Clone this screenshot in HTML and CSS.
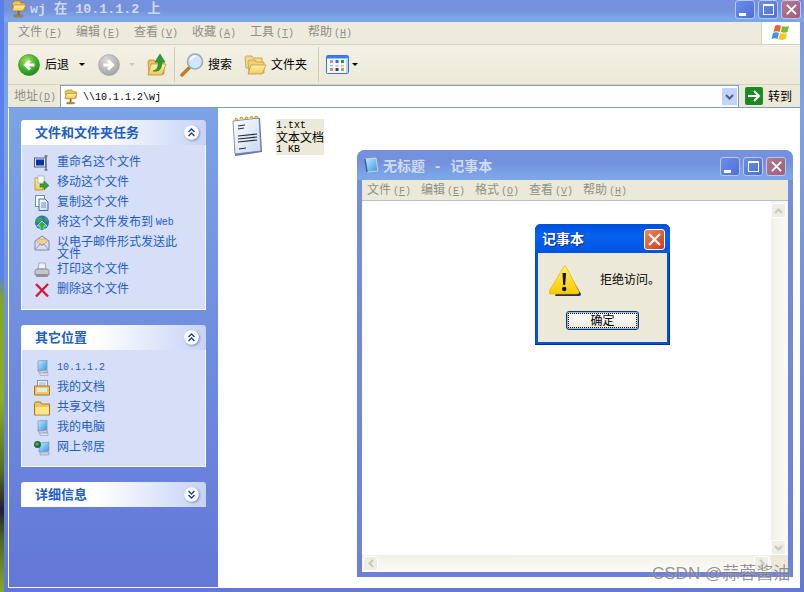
FILE: index.html
```html
<!DOCTYPE html>
<html lang="zh-CN">
<head>
<meta charset="utf-8">
<title>wj 在 10.1.1.2 上</title>
<link rel="stylesheet" href="styles.css">
</head>
<body>
<svg class="defs" aria-hidden="true">
  <defs>
    <radialGradient id="gGreen" cx=".4" cy=".3" r=".8"><stop offset="0" stop-color="#a6e45c"/><stop offset=".55" stop-color="#3fae26"/><stop offset="1" stop-color="#14801a"/></radialGradient>
    <radialGradient id="gGrey" cx=".4" cy=".3" r=".8"><stop offset="0" stop-color="#dcdcdc"/><stop offset="1" stop-color="#9c9c9c"/></radialGradient>
    <linearGradient id="gFolder" x1="0" y1="0" x2="0" y2="1"><stop offset="0" stop-color="#fff3b0"/><stop offset="1" stop-color="#f0c757"/></linearGradient>
    <linearGradient id="gScreen" x1="0" y1="0" x2="1" y2="1"><stop offset="0" stop-color="#c4ecff"/><stop offset="1" stop-color="#2f96e8"/></linearGradient>
    <linearGradient id="gWarn" x1="0" y1="0" x2="0" y2="1"><stop offset="0" stop-color="#fff25a"/><stop offset="1" stop-color="#f8c800"/></linearGradient>
    <linearGradient id="gPage" x1="0" y1="0" x2="1" y2="1"><stop offset="0" stop-color="#ffffff"/><stop offset="1" stop-color="#c8d8ee"/></linearGradient>
    <symbol id="netfolder" viewBox="0 0 16 18">
      <path d="M1 3l3-2h5l1 2h4v7H3z" fill="#f3c74f" stroke="#a87c1c" stroke-width=".7"/>
      <path d="M1 11l2-6h12l-3 6z" fill="url(#gFolder)" stroke="#a87c1c" stroke-width=".7"/>
      <rect x="6.500" y="11" width="2" height="4" fill="#8a6a1c"/>
      <rect x="3" y="15" width="9" height="2" rx="1" fill="#b8922c" stroke="#6a5010" stroke-width=".4"/>
    </symbol>
    <symbol id="computer" viewBox="0 0 16 16">
      <path d="M4 1l9-1v10l-9 1z" fill="url(#gScreen)" stroke="#8a94b8" stroke-width=".8"/>
      <path d="M4 11l9-1 1 2-8 2z" fill="#c8cce0" stroke="#7a80a0" stroke-width=".5"/>
      <path d="M6 13h8v2.500H6z" fill="#dcdfee" stroke="#8a90a8" stroke-width=".5"/>
    </symbol>
    <symbol id="chevup" viewBox="0 0 15 15">
      <circle cx="7.500" cy="7.500" r="7.300" fill="#fff"/>
      <path d="M4.500 7l3-3 3 3M4.500 11l3-3 3 3" fill="none" stroke="#17419e" stroke-width="1.400"/>
    </symbol>
    <symbol id="chevdown" viewBox="0 0 15 15">
      <circle cx="7.500" cy="7.500" r="7.300" fill="#fff"/>
      <path d="M4.500 4l3 3 3-3M4.500 8l3 3 3-3" fill="none" stroke="#17419e" stroke-width="1.400"/>
    </symbol>
  </defs>
</svg>

<div class="desk-strip"></div>

<div class="window">
  <header class="titlebar">
    <svg class="title-icon"><use href="#netfolder"/></svg>
    <span class="title-text">wj 在 10.1.1.2 上</span>
    <div class="win-btns">
      <span class="wbtn"><i class="g-min"></i></span>
      <span class="wbtn"><i class="g-max"></i></span>
      <span class="wbtn wbtn-close"><svg viewBox="0 0 12 12"><path d="M1 1l10 10M11 1L1 11" stroke="#fff" stroke-width="2"/></svg></span>
    </div>
  </header>

  <div class="frame">
    <nav class="menubar">
      <div class="menu-items">
        <span class="mi">文件<span class="lat">(<u>F</u>)</span></span>
        <span class="mi">编辑<span class="lat">(<u>E</u>)</span></span>
        <span class="mi">查看<span class="lat">(<u>V</u>)</span></span>
        <span class="mi">收藏<span class="lat">(<u>A</u>)</span></span>
        <span class="mi">工具<span class="lat">(<u>T</u>)</span></span>
        <span class="mi">帮助<span class="lat">(<u>H</u>)</span></span>
      </div>
      <div class="logo-cell">
        <svg width="20" height="18" viewBox="0 0 20 18">
          <path d="M4 2q3-2 6 0l-1.500 6q-3-1.500-6 0z" fill="#f0622c"/>
          <path d="M11 2q3 1.500 7 0l-1.500 6q-4 1.500-6.500 0z" fill="#7cbc2c"/>
          <path d="M2 9q3-1.500 6 0l-1.500 6q-3-1.500-6 0z" fill="#3c94e4"/>
          <path d="M9 9q3 1.500 7 0l-1.500 6q-4 2-7 0z" fill="#fcc414"/>
        </svg>
      </div>
    </nav>

    <div class="toolbar">
      <svg class="t-back" width="22" height="22" viewBox="0 0 22 22"><circle cx="11" cy="11" r="10.500" fill="url(#gGreen)" stroke="#2a8a20" stroke-width=".6"/><path d="M16.500 11h-8M12 6.500L7.500 11l4.500 4.500" fill="none" stroke="#fff" stroke-width="3"/></svg>
      <span class="t-label t-l-back">后退</span>
      <i class="caret t-c-back"></i>
      <svg class="t-fwd" width="22" height="22" viewBox="0 0 22 22"><circle cx="11" cy="11" r="10.500" fill="url(#gGrey)" stroke="#a0a0a0" stroke-width=".6"/><path d="M5.500 11h8M10 6.500l4.500 4.500-4.500 4.500" fill="none" stroke="#fff" stroke-width="3"/></svg>
      <i class="caret caret-off t-c-fwd"></i>
      <svg class="t-up" width="20" height="23" viewBox="0 0 20 23">
        <path d="M1 9l1-2h5l1 2h9v12H2z" fill="#eec35a" stroke="#b08a2a" stroke-width=".7"/>
        <path d="M1 22l3-11h15l-4 11z" fill="url(#gFolder)" stroke="#b08a2a" stroke-width=".7"/>
        <path d="M6 18q5-.5 5.500-9H8L13 1l5 8h-3q0 11-9 9z" fill="#2e9a34" stroke="#1a7020" stroke-width=".5"/>
      </svg>
      <i class="t-sep t-sep-1"></i>
      <svg class="t-search" width="25" height="25" viewBox="0 0 25 25">
        <path d="M2 23l7-7" stroke="#c6792c" stroke-width="3.500" stroke-linecap="round"/>
        <circle cx="15" cy="9.500" r="7.500" fill="#cfe6fb" stroke="#9aa8c8" stroke-width="1.600"/>
        <path d="M10.500 8q1.500-3.500 5-4" fill="none" stroke="#fff" stroke-width="1.600"/>
      </svg>
      <span class="t-label t-l-search">搜索</span>
      <svg class="t-folders" width="23" height="22" viewBox="0 0 23 22">
        <path d="M1 4l1-2h6l1 2h9v10H2z" fill="#f4da8c" stroke="#c09c3c" stroke-width=".8"/>
        <path d="M4 8l1-2h6l1 2h8v11H5z" fill="#f2d277" stroke="#c09c3c" stroke-width=".8"/>
        <path d="M4 20l3-9h15l-4 9z" fill="url(#gFolder)" stroke="#c09c3c" stroke-width=".8"/>
      </svg>
      <span class="t-label t-l-folders">文件夹</span>
      <i class="t-sep t-sep-2"></i>
      <svg class="t-views" width="23" height="19" viewBox="0 0 23 19">
        <rect x=".5" y=".5" width="22" height="18" rx="1" fill="#f6f8ff" stroke="#3a72d8"/>
        <rect x="1" y="1" width="21" height="2.500" fill="#3a80e8"/>
        <path d="M22 3v15H20V3z" fill="#bcd0f4"/>
        <rect x="4" y="5" width="3" height="3" fill="#a29be0"/><rect x="9.500" y="5" width="3" height="3" fill="#3d6cc8"/><rect x="15" y="5" width="3" height="3" fill="#2a9a30"/>
        <rect x="4" y="10" width="3" height="1.500" fill="#bbb"/><rect x="9.500" y="10" width="3" height="1.500" fill="#bbb"/><rect x="15" y="10" width="3" height="1.500" fill="#bbb"/>
        <rect x="4" y="13" width="3" height="3" fill="#f08a50"/><rect x="9.500" y="13" width="3" height="3" fill="#1a4490"/><rect x="15" y="13" width="3" height="3" fill="#d8a020"/>
      </svg>
      <i class="caret t-c-views"></i>
    </div>

    <div class="addressbar">
      <span class="addr-label">地址<span class="lat">(<u>D</u>)</span></span>
      <div class="addr-box">
        <svg class="addr-icon"><use href="#netfolder"/></svg>
        <span class="lat addr-text">\\10.1.1.2\wj</span>
        <span class="addr-drop"><svg width="9" height="6" viewBox="0 0 9 6"><path d="M1 1l3.500 3.500L8 1" fill="none" stroke="#4d6185" stroke-width="2"/></svg></span>
      </div>
      <span class="go-btn"><svg width="18" height="18" viewBox="0 0 18 18"><rect width="18" height="18" rx="2" fill="#1c8a24"/><path d="M3 9h10M9 4l5 5-5 5" fill="none" stroke="#fff" stroke-width="2"/></svg></span>
      <span class="go-label">转到</span>
    </div>

    <main class="main">
      <aside class="sidebar">
        <section class="panel">
          <div class="panel-head"><h2>文件和文件夹任务</h2><svg class="toggle"><use href="#chevup"/></svg></div>
          <div class="panel-body">
            <div class="row">
              <svg class="ico" viewBox="0 0 16 16"><rect x=".5" y="3" width="11" height="9" fill="#e8ecf8" stroke="#555c78"/><rect x="2" y="4.500" width="8" height="6" fill="#0a2fa8"/><path d="M12 1v14M10.500 1h3M10.500 15h3" stroke="#6a7088" stroke-width="1.500" fill="none"/></svg>
              <span class="txt">重命名这个文件</span>
            </div>
            <div class="row">
              <svg class="ico" viewBox="0 0 16 16"><path d="M1 3h4l1 1h3v11H1z" fill="url(#gFolder)" stroke="#b08a2a" stroke-width=".8"/><rect x="4" y="1" width="6" height="7" fill="#fff" stroke="#8a94b0" stroke-width=".6"/><path d="M6 9h4V6l5 4.500-5 4.500v-3H6z" fill="#38a030" stroke="#1c7020" stroke-width=".5"/></svg>
              <span class="txt">移动这个文件</span>
            </div>
            <div class="row">
              <svg class="ico" viewBox="0 0 16 16"><rect x="1.500" y=".5" width="9" height="11" fill="#fff" stroke="#7a88a8"/><path d="M5 4h6l3 3v8.500H5z" fill="url(#gPage)" stroke="#4a6a9c"/><path d="M7 8h5M7 10h5M7 12h5" stroke="#6a94d0"/></svg>
              <span class="txt">复制这个文件</span>
            </div>
            <div class="row">
              <svg class="ico" viewBox="0 0 16 16"><circle cx="8" cy="7.500" r="7" fill="#2a6ed0"/><path d="M3 3q3-2 5 0t-2 4-4-1zM10 1q4 2 4 6l-3-1z" fill="#3fa83a"/><path d="M8 6l5 5h-3v4.500H6V11H3z" fill="#2fb030" stroke="#fff" stroke-width=".6"/></svg>
              <span class="txt">将这个文件发布到 <span class="lat">Web</span></span>
            </div>
            <div class="row row-wrap">
              <svg class="ico" viewBox="0 0 16 16"><path d="M1 6l7-5 7 5v9H1z" fill="#d6def4" stroke="#7c88a8"/><path d="M3 7V4h10v3L8 10z" fill="#f4d090" stroke="#c09050" stroke-width=".5"/><path d="M1 15l5-6 2 1.500L10 9l5 6" fill="none" stroke="#8a96bc"/></svg>
              <span class="txt">以电子邮件形式发送此文件</span>
            </div>
            <div class="row">
              <svg class="ico" viewBox="0 0 16 16"><path d="M5 1h6l1 6H4z" fill="#f4f4f8" stroke="#8a8e9e" stroke-width=".7"/><path d="M1 9q0-2 3-2h8q3 0 3 2v4H1z" fill="#c4c6cc" stroke="#70747e" stroke-width=".7"/><rect x="2" y="12" width="12" height="3" rx="1" fill="#8e9098"/></svg>
              <span class="txt">打印这个文件</span>
            </div>
            <div class="row">
              <svg class="ico" viewBox="0 0 16 16"><path d="M2 2l12 12.500M14 2L2 14.500" stroke="#d21b3a" stroke-width="2.400"/></svg>
              <span class="txt">删除这个文件</span>
            </div>
          </div>
        </section>

        <section class="panel">
          <div class="panel-head"><h2>其它位置</h2><svg class="toggle"><use href="#chevup"/></svg></div>
          <div class="panel-body panel-body-places">
            <div class="row"><svg class="ico"><use href="#computer"/></svg><span class="txt"><span class="lat">10.1.1.2</span></span></div>
            <div class="row">
              <svg class="ico" viewBox="0 0 16 16"><rect x="3.500" y=".5" width="10" height="8" fill="#eef2fa" stroke="#8a94b0"/><path d="M5 3h7M5 5h7" stroke="#9aa8c8"/><path d="M.5 6h15v9H.5z" fill="#f0c85a" stroke="#a47c20"/><rect x="3" y="8" width="10" height="4" fill="#e2e8f4"/></svg>
              <span class="txt">我的文档</span>
            </div>
            <div class="row">
              <svg class="ico" viewBox="0 0 16 16"><path d="M.5 3.500l1-1.500h5l1 2h8v11H.5z" fill="#f0c85a" stroke="#a47c20"/><path d="M1.500 7h13.500v7.500H1.500z" fill="#fbe48a"/></svg>
              <span class="txt">共享文档</span>
            </div>
            <div class="row"><svg class="ico"><use href="#computer"/></svg><span class="txt">我的电脑</span></div>
            <div class="row">
              <svg class="ico" viewBox="0 0 16 16"><path d="M5 3l10-1v9l-10 1z" fill="url(#gScreen)" stroke="#8a94b8" stroke-width=".7"/><path d="M6 12h9v3H6z" fill="#cdd0e2" stroke="#7a80a0" stroke-width=".5"/><circle cx="3.500" cy="4.500" r="3.500" fill="#1c6e3a"/><path d="M1 4q2-3 4 0l-2 2z" fill="#56b040"/></svg>
              <span class="txt">网上邻居</span>
            </div>
          </div>
        </section>

        <section class="panel">
          <div class="panel-head"><h2>详细信息</h2><svg class="toggle"><use href="#chevdown"/></svg></div>
        </section>
      </aside>

      <div class="content">
        <div class="file">
          <svg class="file-icon" width="31" height="44" viewBox="0 0 31 44">
            <path d="M2 6l26-3 2 34-27 4z" fill="#6a74b0"/>
            <path d="M1 6l26-3 2 33-26 3z" fill="url(#gPage)" stroke="#6c78a8" stroke-width=".8"/>
            <path d="M3 5q1-3 3 0M8 4q1-3 3 0M13 4q1-3 3-.5M18 3q1-3 3 0M23 3q1-3 3 0" fill="none" stroke="#d8a820" stroke-width="1.600"/>
            <path d="M6 11l7-1M6 14l6-1M6 21l19-2M6 24l19-2M6 27l19-2M7 34l7-1" stroke="#2c2c3c" stroke-width="1.100"/>
          </svg>
          <div class="file-text">
            <span class="lat">1.txt</span>
            <span>文本文档</span>
            <span class="lat">1 KB</span>
          </div>
        </div>
      </div>
    </main>
  </div>
</div>

<div class="notepad">
  <header class="np-title">
    <svg class="np-icon" width="15" height="16" viewBox="0 0 15 16"><path d="M1 2l11-1 2 13-11 1z" fill="url(#gScreen)" stroke="#e8e0a8" stroke-width=".8"/><path d="M1 2l2 13" stroke="#3a5aa8" stroke-width="1.500"/></svg>
    <span class="np-title-text">无标题 - 记事本</span>
    <div class="win-btns np-btns">
      <span class="wbtn"><i class="g-min"></i></span>
      <span class="wbtn"><i class="g-max"></i></span>
      <span class="wbtn wbtn-close"><svg viewBox="0 0 12 12"><path d="M1 1l10 10M11 1L1 11" stroke="#fff" stroke-width="2"/></svg></span>
    </div>
  </header>
  <nav class="np-menu">
    <span class="mi">文件<span class="lat">(<u>F</u>)</span></span>
    <span class="mi">编辑<span class="lat">(<u>E</u>)</span></span>
    <span class="mi">格式<span class="lat">(<u>O</u>)</span></span>
    <span class="mi">查看<span class="lat">(<u>V</u>)</span></span>
    <span class="mi">帮助<span class="lat">(<u>H</u>)</span></span>
  </nav>
  <div class="np-client">
    <div class="np-edit"></div>
    <div class="vscroll">
      <span class="sbtn"><svg width="9" height="6" viewBox="0 0 9 6"><path d="M1 5l3.500-3.500L8 5" fill="none" stroke="#c8c8bc" stroke-width="2"/></svg></span>
      <span class="sbtn"><svg width="9" height="6" viewBox="0 0 9 6"><path d="M1 1l3.500 3.500L8 1" fill="none" stroke="#c8c8bc" stroke-width="2"/></svg></span>
    </div>
    <div class="hscroll">
      <span class="sbtn"><svg width="6" height="9" viewBox="0 0 6 9"><path d="M5 1L1.500 4.500 5 8" fill="none" stroke="#c8c8bc" stroke-width="2"/></svg></span>
      <span class="sbtn"><svg width="6" height="9" viewBox="0 0 6 9"><path d="M1 1l3.500 3.500L1 8" fill="none" stroke="#c8c8bc" stroke-width="2"/></svg></span>
    </div>
    <div class="grip"></div>
  </div>
</div>

<div class="dialog">
  <header class="dlg-title">
    <span class="dlg-title-text">记事本</span>
    <span class="dlg-close"><svg viewBox="0 0 12 12"><path d="M1 1l10 10M11 1L1 11" stroke="#fff" stroke-width="2"/></svg></span>
  </header>
  <div class="dlg-body">
    <div class="dlg-msg">
      <svg width="32" height="32" viewBox="0 0 32 32">
        <path d="M17 3l15 26q0 2-2 2H6z" fill="#2a2a6a"/>
        <path d="M15 1.500q1-1 2 0l13 25q.5 2.500-2 2.500H2q-2.500 0-2-2.500z" fill="url(#gWarn)" stroke="#e0b000" stroke-width=".6"/>
        <path d="M13.500 8h3.500l-.8 12h-2z" fill="#10103a"/>
        <circle cx="15.200" cy="24" r="2.200" fill="#10103a"/>
      </svg>
      <span class="dlg-text">拒绝访问。</span>
    </div>
    <button class="dlg-ok" type="button"><span>确定</span></button>
  </div>
</div>

<div class="watermark">CSDN @蒜蓉酱油</div>
</body>
</html>
```

FILE: styles.css
```css
* { box-sizing: border-box; }

html, body { margin: 0; padding: 0; }

body {
  position: relative;
  display: flex;
  width: 804px;
  height: 592px;
  overflow: hidden;
  background: #fff;
  font-family: "Noto Sans CJK SC", "Liberation Sans", sans-serif;
  font-size: 12px;
  line-height: 12px;
  color: #000;
}

.defs { position: absolute; width: 0; height: 0; }

.lat { font-family: "Liberation Mono", "Noto Sans CJK SC", monospace; font-size: 10px; }

.desk-strip {
  flex: none;
  width: 4px;
  background: linear-gradient(180deg, #5a80ec 0, #5a80ec 275px, #7fa822 300px, #8cb018 400px, #56701c 470px, #241c2c 510px, #4c6a20 540px, #86a830 592px);
}

/* Explorer window */
.window {
  flex: 1;
  display: flex;
  flex-direction: column;
  min-width: 0;
  background: linear-gradient(180deg, #7897dd 0, #7ba3e6 110px, #6377d7 592px);
}

.titlebar {
  flex: none;
  display: flex;
  align-items: flex-start;
  height: 22px;
  background: linear-gradient(180deg, #7590dc 0, #7591dc 10px, #7ba6e8 18px, #7ba6e8 22px);
}
.title-icon { flex: none; width: 16px; height: 18px; margin: 0 0 0 7px; }
.title-text {
  margin: 2px 0 0 3px;
  font-family: "Liberation Mono", "Noto Sans CJK SC", monospace;
  font-size: 13.330px;
  line-height: 15px;
  font-weight: 700;
  color: #cfdaf2;
  white-space: pre;
}

.win-btns { display: flex; gap: 3px; margin-left: auto; margin-right: 3px; }
.wbtn {
  display: flex;
  align-items: center;
  justify-content: center;
  width: 20px;
  height: 19px;
  border: 1px solid #b9c9f0;
  border-radius: 3px;
  background: linear-gradient(135deg, #6d8fe6, #4a6fdc);
}
.wbtn-close { background: linear-gradient(135deg, #ad7b90, #a25f78); }
.wbtn-close svg { width: 11px; height: 11px; }
.g-min { width: 7px; height: 3px; margin: 9px 5px 0 0; background: #fff; }
.g-max { width: 11px; height: 11px; border: 1px solid #fff; border-top-width: 2px; }

.frame {
  flex: 1;
  display: flex;
  flex-direction: column;
  min-height: 0;
  margin: 0 4px 4px;
}

.menubar {
  flex: none;
  display: flex;
  height: 23px;
  background: #edeade;
  border-bottom: 1px solid #d8d2bd;
}
.menu-items { flex: 1; display: flex; align-items: center; padding: 0 0 1px 10px; }
.mi { width: 58px; flex: none; color: #8f8f85; white-space: nowrap; }
.mi .lat { margin-left: 2px; }
.logo-cell {
  flex: none;
  display: flex;
  align-items: center;
  justify-content: center;
  width: 39px;
  background: #fff;
  border-left: 1px solid #d8d2bd;
}

.toolbar {
  flex: none;
  display: flex;
  align-items: center;
  height: 40px;
  background: linear-gradient(180deg, #f3f1e6, #ece9d8);
  border-bottom: 1px solid #d8d2bd;
}
.t-label { flex: none; margin-bottom: 2px; white-space: nowrap; }
.t-back { margin-left: 10px; }
.t-l-back { margin-left: 5px; width: 24px; }
.caret { flex: none; width: 0; height: 0; border: 3px solid transparent; border-top: 3px solid #000; border-bottom: 0; }
.caret-off { border-top-color: #c8c8c0; }
.t-c-back { margin-left: 10px; }
.t-fwd { margin-left: 13px; }
.t-c-fwd { margin-left: 9px; }
.t-up { margin-left: 12px; }
.t-sep { flex: none; width: 1px; height: 35px; background: #d2ccb6; }
.t-sep-1 { margin-left: 7px; }
.t-search { margin-left: 5px; }
.t-l-search { margin-left: 3px; }
.t-folders { margin-left: 12px; }
.t-l-folders { margin-left: 4px; }
.t-sep-2 { margin-left: 11px; }
.t-views { margin-left: 7px; }
.t-c-views { margin-left: 3px; }

.addressbar {
  flex: none;
  display: flex;
  align-items: center;
  height: 22px;
  background: #ece9d8;
}
.addr-label { flex: none; width: 52px; padding-left: 6px; color: #8f8f85; }
.addr-box {
  flex: none;
  display: flex;
  align-items: center;
  width: 679px;
  height: 22px;
  background: #fff;
  border: 1px solid #7f9db9;
  border-bottom: 0;
}
.addr-icon { flex: none; width: 14px; height: 16px; margin-left: 3px; }
.addr-text { margin-left: 5px; padding-top: 2px; }
.addr-drop {
  display: flex;
  align-items: center;
  justify-content: center;
  width: 15px;
  height: 17px;
  margin-left: auto;
  margin-right: 1px;
  background: #c1d3fb;
  border-radius: 1px;
}
.go-btn { flex: none; display: flex; margin-left: 6px; }
.go-label { flex: none; margin-left: 5px; }

.main {
  flex: 1;
  display: flex;
  min-height: 0;
  border-top: 1px solid #7f9db9;
}

.sidebar {
  flex: none;
  display: flex;
  flex-direction: column;
  gap: 15px;
  width: 210px;
  padding: 12px 12px 0 12px;
  border-left: 1px solid #fff;
  border-bottom: 1px solid #fff;
}
.panel { width: 185px; }
.panel-head {
  display: flex;
  align-items: center;
  justify-content: space-between;
  height: 25px;
  padding: 0 7px 0 14px;
  border-radius: 3px 3px 0 0;
  background: linear-gradient(90deg, #fff 0, #fff 40%, #c6d3f7 100%);
}
.panel-head h2 {
  margin: 0 0 2px;
  font-size: 13px;
  line-height: 14px;
  font-weight: 700;
  color: #215dc6;
}
.toggle { flex: none; width: 15px; height: 15px; filter: drop-shadow(1px 1px 1px rgba(60, 70, 120, .5)); }
.panel-body {
  padding: 6px 18px 11px 12px;
  background: #d6dff7;
  border: 1px solid #fff;
  border-top: 0;
}
.panel-body-places { padding-bottom: 10px; }
.row {
  display: flex;
  align-items: flex-start;
  gap: 7px;
  min-height: 20px;
  color: #215dc6;
}
.row-wrap .txt { line-height: 11.500px; }
.ico { flex: none; width: 16px; height: 16px; margin-top: 4px; }
.txt { padding-top: 4px; }
.txt .lat { vertical-align: 1px; }

.content { flex: 1; min-width: 0; background: #fff; padding: 7px 0 0 14px; }
.file { display: flex; align-items: flex-start; gap: 13px; }
.file-icon { flex: none; }
.file-text {
  display: flex;
  flex-direction: column;
  width: 48px;
  margin-top: 4px;
  background: #ece9d8;
}
.file-text span { height: 12px; }
.file-text .lat { padding-top: 1px; line-height: 12px; }

/* Notepad window */
.notepad {
  position: absolute;
  left: 357px;
  top: 150px;
  display: flex;
  flex-direction: column;
  width: 436px;
  height: 427px;
  padding: 0 5px 5px;
  border-radius: 8px 8px 0 0;
  background: linear-gradient(180deg, #7590dc 0, #6c80d8 100%);
}
.np-title {
  flex: none;
  display: flex;
  align-items: flex-start;
  height: 30px;
  margin: 0 -5px;
  padding: 7px 0 0 7px;
  border-radius: 8px 8px 0 0;
  background: linear-gradient(180deg, #7590dc 0, #7590dc 12px, #7ba6e8 26px);
}
.np-icon { flex: none; }
.np-title-text {
  margin: 1px 0 0 4px;
  font-family: "Liberation Mono", "Noto Sans CJK SC", monospace;
  font-size: 14px;
  line-height: 18px;
  font-weight: 700;
  color: #cfdaf2;
  white-space: pre;
}
.np-btns { margin-right: 7px; }
.np-menu {
  flex: none;
  display: flex;
  align-items: center;
  height: 21px;
  padding: 0 0 0 5px;
  background: #ece9d8;
  border-bottom: 1px solid #b5bfd0;
}
.np-menu .mi { width: 54px; }

.np-client {
  flex: 1;
  display: grid;
  grid-template-columns: 1fr 17px;
  grid-template-rows: 1fr 17px;
  min-height: 0;
  background: #fff;
}
.np-edit { background: #fff; }
.vscroll {
  display: flex;
  flex-direction: column;
  justify-content: space-between;
  padding: 2px 2px 0 0;
  background: linear-gradient(90deg, #f3f1e8, #fbfaf6);
}
.hscroll {
  display: flex;
  justify-content: space-between;
  padding: 1px 2px 1px 1px;
  background: linear-gradient(180deg, #f3f1e8, #fbfaf6);
}
.sbtn {
  display: flex;
  align-items: center;
  justify-content: center;
  width: 15px;
  height: 15px;
  background: #efeee6;
  border: 1px solid #fff;
  border-radius: 2px;
}
.grip { background: #ece9d8; }

/* Message box */
.dialog {
  position: absolute;
  left: 535px;
  top: 224px;
  display: flex;
  flex-direction: column;
  width: 135px;
  height: 121px;
  border-radius: 6px 6px 0 0;
  background: #0052e0;
  padding: 0 3px 3px;
  box-shadow: inset 0 -1px #0030a0, inset 1px 0 #0048c8, inset -1px 0 #0030a0;
}
.dlg-title {
  flex: none;
  display: flex;
  align-items: center;
  justify-content: space-between;
  height: 29px;
  margin: 0 -3px;
  padding: 1px 5px 0 7px;
  border-radius: 6px 6px 0 0;
  background: linear-gradient(180deg, #0050d8 0, #0462ee 40%, #0054e3 100%);
}
.dlg-title-text {
  margin-bottom: 2px;
  font-size: 14px;
  line-height: 16px;
  font-weight: 700;
  color: #fff;
  text-shadow: 1px 1px #0a2a88;
}
.dlg-close {
  display: flex;
  align-items: center;
  justify-content: center;
  width: 21px;
  height: 21px;
  border: 1px solid #fff;
  border-radius: 3px;
  background: linear-gradient(135deg, #ee8a60, #cc3a18);
}
.dlg-close svg { width: 13px; height: 13px; }
.dlg-body {
  flex: 1;
  display: flex;
  flex-direction: column;
  align-items: center;
  background: #ece9d8;
}
.dlg-msg { display: flex; align-items: center; width: 100%; padding: 12px 0 0 11px; }
.dlg-text { margin: 0 0 4px 19px; white-space: nowrap; }
.dlg-ok {
  display: flex;
  align-items: center;
  justify-content: center;
  width: 73px;
  height: 19px;
  margin: 14px 0 0;
  padding: 1px;
  border: 1px solid #003c74;
  border-radius: 3px;
  background: linear-gradient(180deg, #fff, #ece9d8);
  box-shadow: inset 0 0 0 1px #9db8e4;
  font: inherit;
  color: #000;
}
.dlg-ok span { display: block; width: 100%; height: 15px; border: 1px dotted #000; line-height: 11px; }

.watermark {
  position: absolute;
  left: 652px;
  top: 564px;
  font-family: "Liberation Sans", "Noto Sans CJK SC", sans-serif;
  font-size: 17px;
  line-height: 20px;
  color: rgba(100, 100, 100, .7);
  text-shadow: 0 0 2px rgba(255, 255, 255, .6);
  white-space: nowrap;
}
```
